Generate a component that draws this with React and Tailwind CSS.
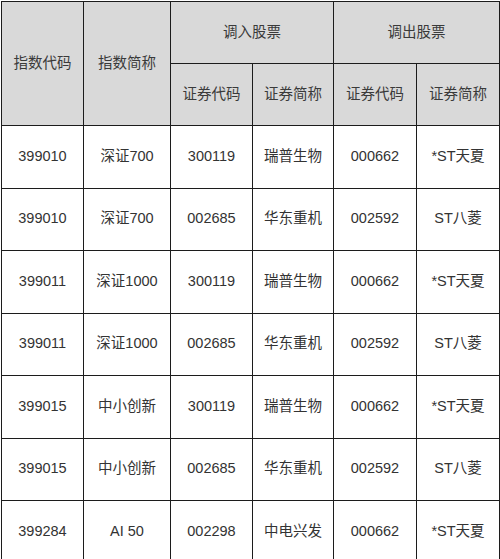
const rows = [
  ['399010', '深证700', '300119', '瑞普生物', '000662', '*ST天夏'],
  ['399010', '深证700', '002685', '华东重机', '002592', 'ST八菱'],
  ['399011', '深证1000', '300119', '瑞普生物', '000662', '*ST天夏'],
  ['399011', '深证1000', '002685', '华东重机', '002592', 'ST八菱'],
  ['399015', '中小创新', '300119', '瑞普生物', '000662', '*ST天夏'],
  ['399015', '中小创新', '002685', '华东重机', '002592', 'ST八菱'],
  ['399284', 'AI 50', '002298', '中电兴发', '000662', '*ST天夏'],
]

const th = 'border border-[#1c1c1c] bg-[#d9d9d9] font-normal text-[#3a3a3a] text-center align-middle'
const td = 'border border-[#1c1c1c] text-center align-middle text-[#333]'

export default function App() {
  return (
    <div className="h-[559px] overflow-hidden bg-white pt-px pl-px">
      <table
        className="w-[498px] table-fixed border-collapse text-[14.5px]"
        style={{ fontFamily: '"Liberation Sans", "Noto Sans CJK SC", sans-serif' }}
      >
        <colgroup>
          <col className="w-[82px]" />
          <col className="w-[87px]" />
          <col className="w-[82px]" />
          <col className="w-[81px]" />
          <col className="w-[83px]" />
          <col className="w-[83px]" />
        </colgroup>
        <thead>
          <tr className="h-[62px]">
            <th rowSpan={2} className={th}>指数代码</th>
            <th rowSpan={2} className={th}>指数简称</th>
            <th colSpan={2} className={th}>调入股票</th>
            <th colSpan={2} className={th}>调出股票</th>
          </tr>
          <tr className="h-[62px]">
            <th className={th}>证券代码</th>
            <th className={th}>证券简称</th>
            <th className={th}>证券代码</th>
            <th className={th}>证券简称</th>
          </tr>
        </thead>
        <tbody>
          {rows.map((r, i) => (
            <tr key={i} className="h-[62.5px]">
              {r.map((c, j) => (
                <td key={j} className={td}>{c}</td>
              ))}
            </tr>
          ))}
        </tbody>
      </table>
    </div>
  )
}
